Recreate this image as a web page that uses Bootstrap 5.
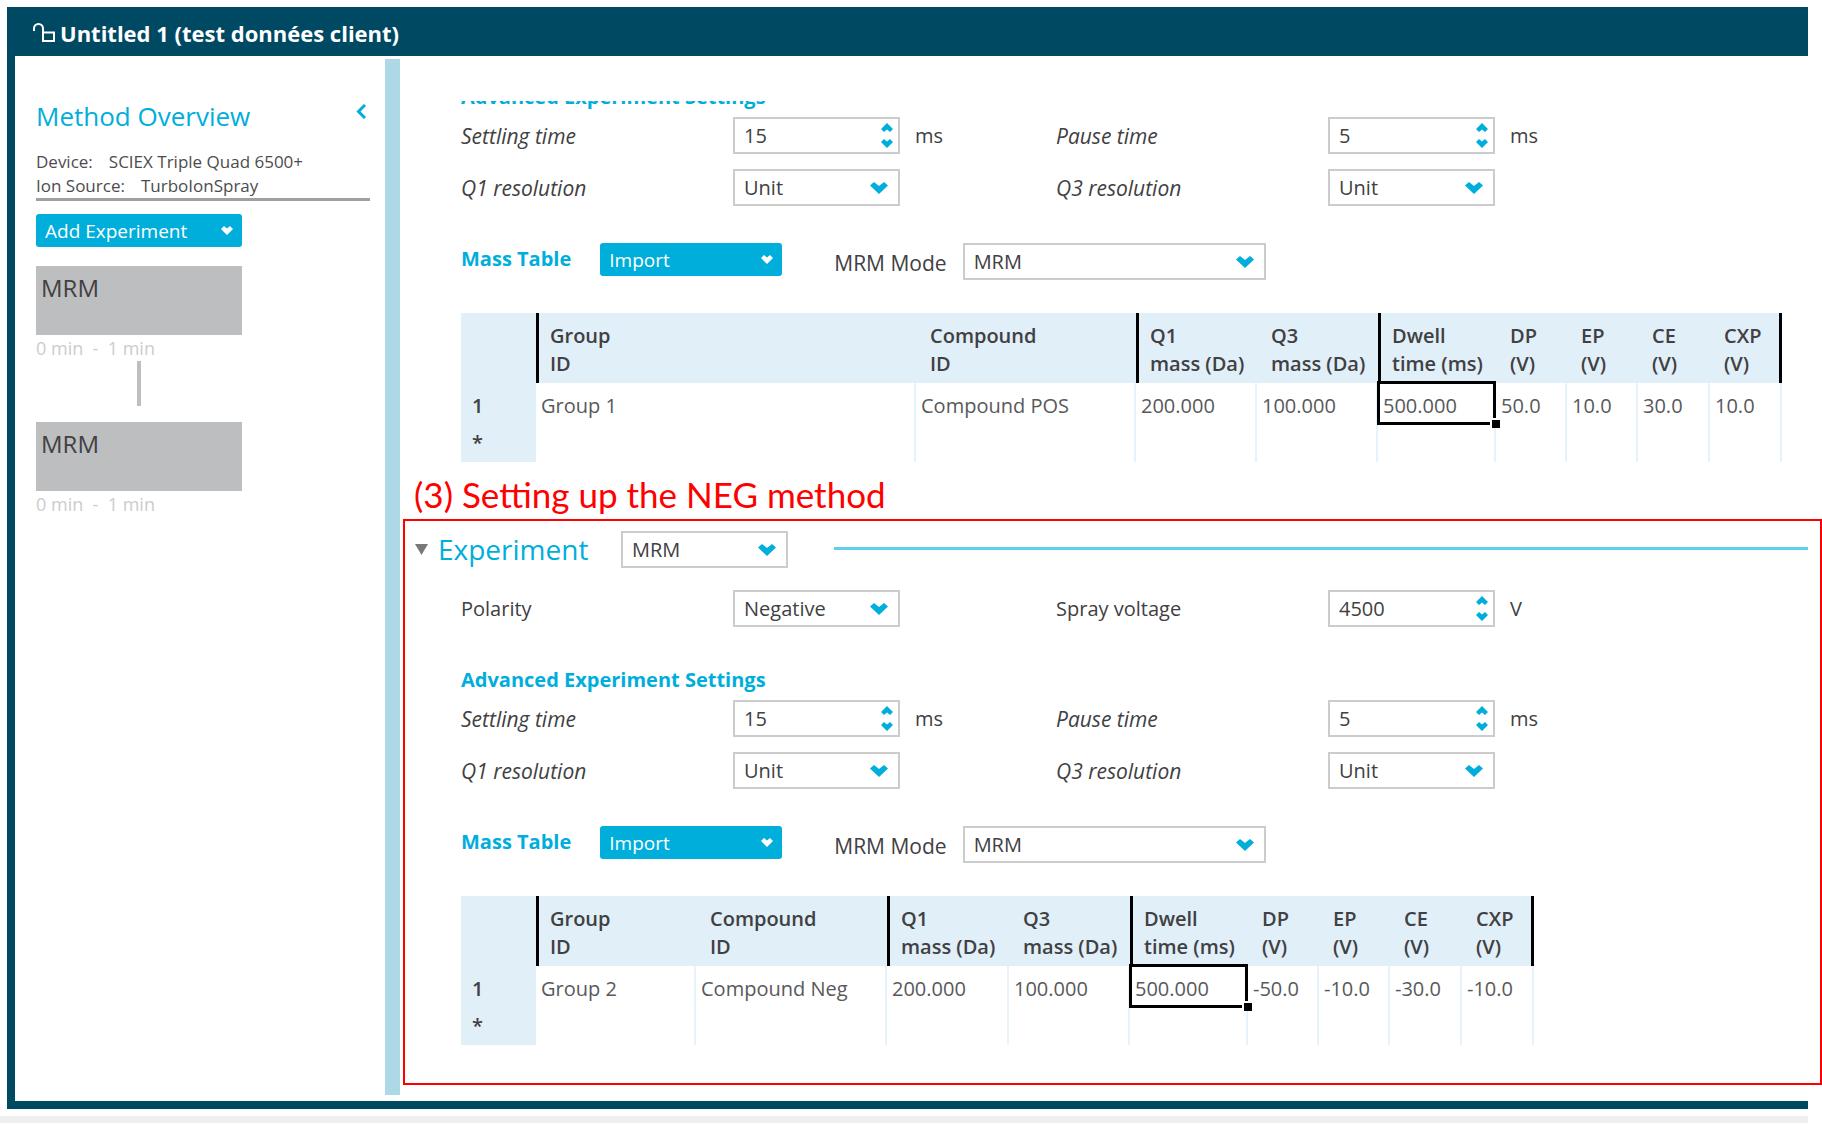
<!DOCTYPE html>
<html lang="en">
<head>
<meta charset="utf-8">
<meta name="viewport" content="width=device-width, initial-scale=1">
<title>Untitled 1 (test données client)</title>
<link href="https://cdn.jsdelivr.net/npm/bootstrap@5.3.0/dist/css/bootstrap.min.css" rel="stylesheet">
<style>
:root { --navy:#004963; --cyan:#00aedb; --ink:#414042; --pale:#e0eff8; }
body { font-family:"Open Sans","Noto Sans",sans-serif; font-size:20px; line-height:28px; color:var(--ink); background:#fff; padding:7px 0 0 7px; }
.titlebar { background:var(--navy); color:#fff; height:49px; margin-right:14px; padding:3px 0 0 25px; font-size:22px; font-weight:700; }
.frame { border-left:8px solid var(--navy); }
.frame-foot { background:var(--navy); height:8px; margin-right:14px; }
.page-foot { background:#efefef; height:7px; margin:7px 14px 0 -7px; }
.overview { width:370px; padding:40px 15px 0 21px; flex:none; }
.splitter { width:15px; background:#add8e6; margin:3px 0 6px; flex:none; }
.heading { color:var(--cyan); font-size:26px; line-height:40px; font-weight:400; margin:0; }
.device { font-size:17px; line-height:24px; border-bottom:3px solid #a0a0a0; margin-top:14px; color:#4c4c4e; }
.btn-cyan, .btn-cyan:hover { background:var(--cyan); color:#fff; border:0; border-radius:3px; font-size:19px; line-height:28px; height:33px; padding:0 9px; }
.side-w { width:206px; padding-top:13px; }
.exp-list { margin-top:19px; }
.exp-box { background:#bdbec0; height:69px; font-size:24px; padding:8px 5px; }
.exp-time { color:#cbcccf; font-size:18px; line-height:26px; white-space:pre; }
.connector { width:4px; height:45px; background:#bdbec0; margin:0 auto 16px; }
.content-area { padding:45px 0 16px 3px; min-width:0; }
.inset { padding-left:58px; }
.marked { border:2px solid #f00; padding:10px 0 38px; }
.marked .inset { padding-left:56px; }
.clip { height:16px; overflow:hidden; }
.sub { color:var(--cyan); font-weight:700; font-size:20px; line-height:28px; margin:0; white-space:nowrap; }
.half { flex:0 0 595px; }
.lbl { flex:0 0 272px; }
.fst-italic .lbl { font-size:21px; }
.pair { margin-bottom:15px; }
.box { font-size:20px; line-height:27px; height:37px; width:167px; border:2px solid #ccc; border-radius:0; padding:3px 9px; color:var(--ink); flex:none;
  background-color:#fff; background-repeat:no-repeat; appearance:none; -moz-appearance:textfield; }
.box::-webkit-inner-spin-button { display:none; }
select.box { padding-right:34px; background-size:18px 13px; background-position:right 10px center;
  background-image:url("data:image/svg+xml,%3Csvg xmlns='http://www.w3.org/2000/svg' viewBox='0 0 18 13'%3E%3Cpath fill='%2300aedb' d='M0 4.5 4 1l5 4 5-4 4 3.5L9 13z'/%3E%3C/svg%3E"); }
input.box { background-size:12px 25px; background-position:right 5px center;
  background-image:url("data:image/svg+xml,%3Csvg xmlns='http://www.w3.org/2000/svg' viewBox='0 0 12 25'%3E%3Cpath fill='%2300aedb' d='M6 0 12 6 9 9 6 6.500 3 9 0 6zM6 25 12 19 9 16 6 18.500 3 16 0 19z'/%3E%3C/svg%3E"); }
select.wide { width:303px; }
.unit { margin-left:15px; }
.massrow { margin-top:37px; margin-bottom:33px; height:37px; }
.massrow .sub { line-height:31px; }
.import { width:182px; margin-left:29px; }
.mode { margin-left:52px; margin-right:16px; line-height:41px; font-size:21px; }
.rule { height:3px; background:#5fcfea; margin:0 12px 2px 46px; }
.exp-head { height:36px; padding-left:10px; }
.exp-name { width:183px; margin-left:10px; font-size:28px; }
.polarity { margin-top:23px; margin-bottom:39px; }
.adv { margin-bottom:6px; }
.grid { table-layout:fixed; border-collapse:separate; border-spacing:0; margin:0; }
.grid th, .grid td { padding:0 0 0 5px; text-align:left; white-space:nowrap; }
.grid thead th { background:var(--pale); height:70px; padding:9px 0 5px 14px; font-weight:600; }
.grid thead .bar { border-left:3px solid #000; padding-left:11px; }
.grid thead .last { border-right:3px solid #000; }
.grid tbody th { background:var(--pale); padding-left:11px; font-weight:600; }
.grid tbody td { border-right:2px solid #e7f3fa; color:#58595b; }
.grid tbody tr { height:40px; }
.grid tbody tr.blank { height:39px; }
.grid tbody tr.first > * { padding-top:6px; }
.active-cell { position:relative; }
.active-cell::before { content:""; position:absolute; inset:-2px -2px -2px -1px; border:3px solid #000; }
.active-cell::after { content:""; position:absolute; right:-6px; bottom:-5px; width:10px; height:10px; background:#000; border:solid #fff; border-width:2px 0 0 2px; box-sizing:border-box; }
.note { color:#f00; font-family:Lato,"Open Sans",sans-serif; font-size:35px; line-height:44px; margin:10px 0 3px 11px; }
.toggle { border:0; background:none; padding:0; line-height:0; }
</style>
<script src="https://cdn.jsdelivr.net/npm/bootstrap@5.3.0/dist/js/bootstrap.bundle.min.js"></script>
</head>
<body>
<header class="titlebar d-flex align-items-center">
  <svg width="24" height="22" viewBox="0 0 24 22" fill="none" stroke="#fff" stroke-width="2" class="me-1" aria-hidden="true"><path d="M2 9V6.500a4.500 4.500 0 0 1 9 0V19h11v-8.500H11"/></svg>
  <span>Untitled 1 (test données client)</span>
</header>
<div class="frame d-flex">
  <aside class="overview">
    <div class="d-flex justify-content-between align-items-start">
      <h1 class="heading">Method Overview</h1>
      <button class="toggle mt-2 me-1" aria-label="Collapse overview"><svg width="10" height="15" viewBox="0 0 10 15" fill="none" stroke="#00aedb" stroke-width="3"><path d="M9 1 2.500 7.500 9 14"/></svg></button>
    </div>
    <div class="device">
      <div class="d-flex"><span class="me-3">Device:</span><span>SCIEX Triple Quad 6500+</span></div>
      <div class="d-flex"><span class="me-3">Ion Source:</span><span>TurboIonSpray</span></div>
    </div>
    <div class="side-w">
      <button class="btn btn-cyan w-100 d-flex align-items-center justify-content-between">Add Experiment
        <svg width="12" height="9" viewBox="0 0 12 9" fill="#fff"><path d="M0 3 3 0 6 2.500 9 0 12 3 6 9z"/></svg></button>
      <div class="exp-list">
        <div class="exp-box">MRM</div>
        <div class="exp-time">0 min  -  1 min</div>
        <div class="connector"></div>
        <div class="exp-box">MRM</div>
        <div class="exp-time">0 min  -  1 min</div>
      </div>
    </div>
  </aside>
  <div class="splitter"></div>
  <main class="content-area flex-grow-1">
    <section class="inset">
      <div class="clip d-flex align-items-end"><h2 class="sub adv">Advanced Experiment Settings</h2></div>
      <div class="d-flex pair fst-italic">
        <div class="half d-flex align-items-center"><label class="lbl" for="s1">Settling time</label><input class="box" type="number" id="s1" value="15"><span class="unit fst-normal">ms</span></div>
        <div class="half d-flex align-items-center"><label class="lbl" for="p1">Pause time</label><input class="box" type="number" id="p1" value="5"><span class="unit fst-normal">ms</span></div>
      </div>
      <div class="d-flex fst-italic">
        <div class="half d-flex align-items-center"><label class="lbl" for="q1a">Q1 resolution</label><select class="box" id="q1a"><option>Unit</option></select></div>
        <div class="half d-flex align-items-center"><label class="lbl" for="q3a">Q3 resolution</label><select class="box" id="q3a"><option>Unit</option></select></div>
      </div>
      <div class="d-flex align-items-start massrow">
        <h2 class="sub">Mass Table</h2>
        <button class="btn btn-cyan import d-flex align-items-center justify-content-between">Import
          <svg width="12" height="9" viewBox="0 0 12 9" fill="#fff"><path d="M0 3 3 0 6 2.500 9 0 12 3 6 9z"/></svg></button>
        <label class="mode" for="m1">MRM Mode</label><select class="box wide" id="m1"><option>MRM</option></select>
      </div>
      <table class="grid" style="width:1321px">
        <colgroup><col style="width:75px"><col style="width:380px"><col style="width:220px"><col style="width:121px"><col style="width:121px"><col style="width:118px"><col style="width:71px"><col style="width:71px"><col style="width:72px"><col style="width:72px"></colgroup>
        <thead><tr><th></th><th class="bar">Group<br>ID</th><th>Compound<br>ID</th><th class="bar">Q1<br>mass (Da)</th><th>Q3<br>mass (Da)</th><th class="bar">Dwell<br>time (ms)</th><th>DP<br>(V)</th><th>EP<br>(V)</th><th>CE<br>(V)</th><th class="last">CXP<br>(V)</th></tr></thead>
        <tbody>
          <tr class="first"><th>1</th><td>Group 1</td><td>Compound POS</td><td>200.000</td><td>100.000</td><td class="active-cell">500.000</td><td>50.0</td><td>10.0</td><td>30.0</td><td>10.0</td></tr>
          <tr class="blank"><th>*</th><td></td><td></td><td></td><td></td><td></td><td></td><td></td><td></td><td></td></tr>
        </tbody>
      </table>
    </section>
    <p class="note">(3) Setting up the NEG method</p>
    <section class="marked">
      <div class="d-flex align-items-center exp-head">
        <button class="toggle" aria-label="Collapse experiment"><svg width="13" height="11" viewBox="0 0 13 11" fill="#77787b"><path d="M0 0h13L6.500 11z"/></svg></button>
        <h2 class="heading exp-name">Experiment</h2>
        <select class="box" aria-label="Experiment type"><option>MRM</option></select>
        <div class="rule flex-grow-1"></div>
      </div>
      <div class="inset">
        <div class="d-flex polarity">
          <div class="half d-flex align-items-center"><label class="lbl" for="pol">Polarity</label><select class="box" id="pol"><option>Negative</option></select></div>
          <div class="half d-flex align-items-center"><label class="lbl" for="volt">Spray voltage</label><input class="box" type="number" id="volt" value="4500"><span class="unit">V</span></div>
        </div>
        <h2 class="sub adv">Advanced Experiment Settings</h2>
        <div class="d-flex pair fst-italic">
          <div class="half d-flex align-items-center"><label class="lbl" for="s2">Settling time</label><input class="box" type="number" id="s2" value="15"><span class="unit fst-normal">ms</span></div>
          <div class="half d-flex align-items-center"><label class="lbl" for="p2">Pause time</label><input class="box" type="number" id="p2" value="5"><span class="unit fst-normal">ms</span></div>
        </div>
        <div class="d-flex fst-italic">
          <div class="half d-flex align-items-center"><label class="lbl" for="q1b">Q1 resolution</label><select class="box" id="q1b"><option>Unit</option></select></div>
          <div class="half d-flex align-items-center"><label class="lbl" for="q3b">Q3 resolution</label><select class="box" id="q3b"><option>Unit</option></select></div>
        </div>
        <div class="d-flex align-items-start massrow">
          <h2 class="sub">Mass Table</h2>
          <button class="btn btn-cyan import d-flex align-items-center justify-content-between">Import
            <svg width="12" height="9" viewBox="0 0 12 9" fill="#fff"><path d="M0 3 3 0 6 2.500 9 0 12 3 6 9z"/></svg></button>
          <label class="mode" for="m2">MRM Mode</label><select class="box wide" id="m2"><option>MRM</option></select>
        </div>
        <table class="grid" style="width:1073px">
          <colgroup><col style="width:75px"><col style="width:160px"><col style="width:191px"><col style="width:122px"><col style="width:121px"><col style="width:118px"><col style="width:71px"><col style="width:71px"><col style="width:72px"><col style="width:72px"></colgroup>
          <thead><tr><th></th><th class="bar">Group<br>ID</th><th>Compound<br>ID</th><th class="bar">Q1<br>mass (Da)</th><th>Q3<br>mass (Da)</th><th class="bar">Dwell<br>time (ms)</th><th>DP<br>(V)</th><th>EP<br>(V)</th><th>CE<br>(V)</th><th class="last">CXP<br>(V)</th></tr></thead>
          <tbody>
            <tr class="first"><th>1</th><td>Group 2</td><td>Compound Neg</td><td>200.000</td><td>100.000</td><td class="active-cell">500.000</td><td>-50.0</td><td>-10.0</td><td>-30.0</td><td>-10.0</td></tr>
            <tr class="blank"><th>*</th><td></td><td></td><td></td><td></td><td></td><td></td><td></td><td></td><td></td></tr>
          </tbody>
        </table>
      </div>
    </section>
  </main>
</div>
<div class="frame-foot"></div>
<div class="page-foot"></div>
</body>
</html>
